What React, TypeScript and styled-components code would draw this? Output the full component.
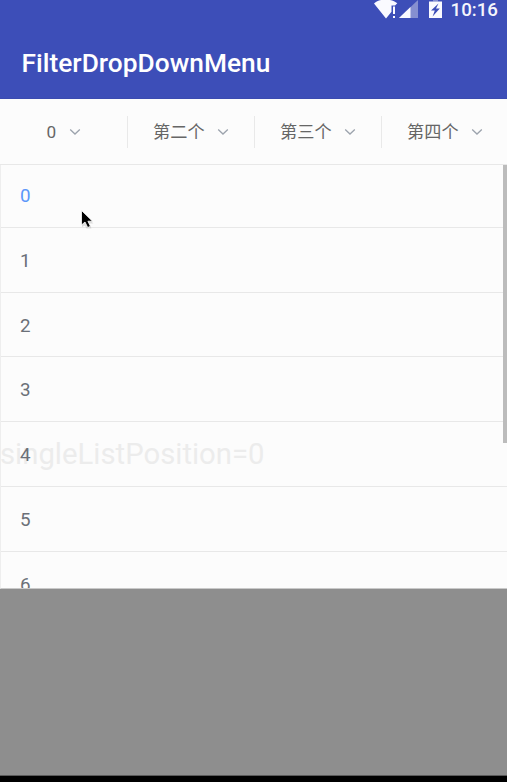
import React from "react";
import styled, { createGlobalStyle } from "styled-components";

const GlobalStyle = createGlobalStyle`
  * { box-sizing: border-box; }
  body { margin: 0; background: #000; font-family: Roboto, "Noto Sans CJK SC", sans-serif; }
`;

const Screen = styled.main`
  width: 507px;
  height: 782px;
  display: flex;
  flex-direction: column;
  overflow: hidden;
  background: #8e8e8e;
`;

const Header = styled.header`
  height: 99px;
  flex: none;
  background: #3d4eb8;
  border-bottom: 1px solid #3b4bb0;
  color: #fff;
`;

const StatusBar = styled.div`
  height: 27px;
  display: flex;
  align-items: flex-start;
  justify-content: flex-end;
  padding-right: 9px;
`;

const StatusIcons = styled.svg`
  width: 72px;
  height: 20px;
  margin-right: 5px;
`;

const Clock = styled.time`
  font-size: 18.7px;
  font-weight: 500;
  line-height: 20px;
  color: #f4f5fc;
`;

const Title = styled.h1`
  margin: 0;
  padding-left: 21.5px;
  font-size: 26.3px;
  line-height: 72px;
  font-weight: 500;
  letter-spacing: 0.02px;
`;

const FilterBar = styled.nav`
  height: 66px;
  flex: none;
  display: grid;
  grid-template-columns: 128px 127px 127px 125px;
  align-items: center;
  background: #fcfcfc;
  border-bottom: 1px solid #e8e8e8;
`;

const FilterTab = styled.button<{ $start: number; $last?: boolean }>`
  height: 32px;
  display: flex;
  align-items: center;
  gap: 12.5px;
  border: 0;
  border-right: ${(p) => (p.$last ? "0" : "1px solid #e9e9e9")};
  padding: 0 0 0 ${(p) => p.$start}px;
  background: transparent;
  color: #666;
  font: 400 17.2px/32px Roboto, "Noto Sans CJK SC", sans-serif;
  white-space: nowrap;
`;

const Chevron = styled.svg`
  width: 12px;
  height: 8px;
  flex: none;
`;

const Panel = styled.section`
  position: relative;
  height: 424px;
  flex: none;
  overflow: hidden;
  background: #fcfcfc;
  border-left: 1px solid #eee;
  border-bottom: 1px solid #c9c9c9;
`;

const Row = styled.div<{ $height: number; $selected?: boolean }>`
  height: ${(p) => p.$height}px;
  padding-left: 19px;
  border-bottom: 1px solid #e8e8e8;
  font-size: 18.8px;
  line-height: ${(p) => (p.$selected ? 62 : 67)}px;
  color: ${(p) => (p.$selected ? "#5b97fa" : "#6b7078")};
`;

const Behind = styled.div`
  position: absolute;
  left: -1px;
  top: 269px;
  font-size: 29.3px;
  line-height: 40px;
  color: #ececec;
`;

const List = styled.div`
  position: relative;
`;

const ScrollThumb = styled.div`
  position: absolute;
  top: 0;
  right: 0;
  width: 4px;
  height: 278px;
  background: #bcbcbc;
`;

const Cursor = styled.svg`
  position: absolute;
  left: 78px;
  top: 44px;
  width: 16px;
  height: 22px;
`;

const Scrim = styled.div`
  flex: 1;
  background: #8e8e8e;
  border-bottom: 1px solid #595959;
`;

const NavigationEdge = styled.footer`
  height: 6px;
  flex: none;
  background: #000;
`;

const filters = [
  { label: "0", start: 46.5 },
  { label: "第二个", start: 25 },
  { label: "第三个", start: 25 },
  { label: "第四个", start: 25 },
];

const rowHeights = [63, 65, 64, 65, 65, 65, 65];

export default function App() {
  return (
    <>
      <GlobalStyle />
      <Screen>
        <Header>
          <StatusBar>
            <StatusIcons viewBox="0 0 72 20">
              <path d="M0 3.500C2 1.800 4.200.600 7 0h9c3 .500 5.300 1.700 7.300 3.300L21 5.500H17.500v6.200L12 18.500Z" fill="#fafaff" />
              <path d="M19 6.500h2v7.500h-2zM19 16h2v2h-2z" fill="#fafaff" />
              <path d="M44 0v18H25Z" fill="#858fd0" />
              <path d="M36.500 7v11H25Z" fill="#fafaff" />
              <path d="M59 0h5v1.500h-5z" fill="#858fd0" />
              <path d="M55 1.500h13V18H55z" fill="#fafaff" />
              <path d="m64.500 3.500-7.500 7h3.800l-2.200 6 7.200-8H62Z" fill="#3d4eb8" />
            </StatusIcons>
            <Clock>10:16</Clock>
          </StatusBar>
          <Title>FilterDropDownMenu</Title>
        </Header>
        <FilterBar>
          {filters.map((filter, index) => (
            <FilterTab key={filter.label} $start={filter.start} $last={index === filters.length - 1}>
              {filter.label}
              <Chevron viewBox="0 0 12 8">
                <path d="m1.200 1.500 4.800 4.500 4.800-4.500" fill="none" stroke="#9ca3ad" strokeWidth="1.300" />
              </Chevron>
            </FilterTab>
          ))}
        </FilterBar>
        <Panel>
          <Behind>singleListPosition=0</Behind>
          <List>
            {rowHeights.map((height, index) => (
              <Row key={index} $height={height} $selected={index === 0}>
                {index}
              </Row>
            ))}
          </List>
          <ScrollThumb />
          <Cursor viewBox="0 0 16 22">
            <path d="M3 4v14l3-1.500 1.500 3h5l-2-5h4Z" fill="#999" opacity=".3" />
            <path
              d="M2.500 1.500v14.500l3.500-3 2.700 5.500 2.700-1.200-2.500-5.100h4.600Z"
              fill="#000"
              stroke="#fff"
              strokeWidth=".8"
            />
          </Cursor>
        </Panel>
        <Scrim />
        <NavigationEdge />
      </Screen>
    </>
  );
}
